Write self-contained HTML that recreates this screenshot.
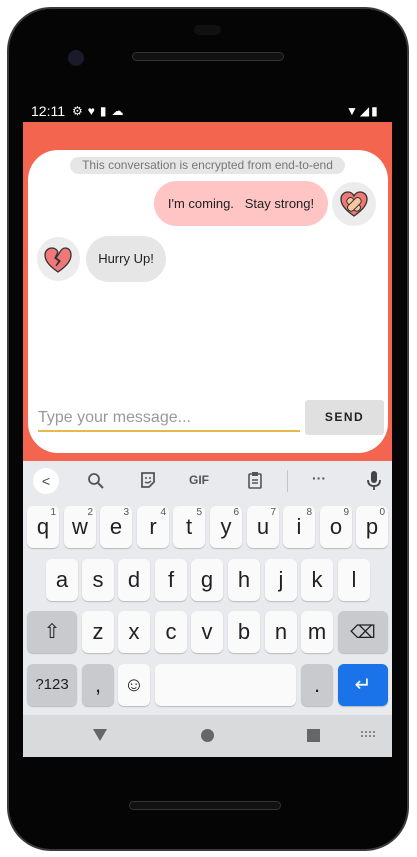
<!DOCTYPE html>
<html><head><style>
*{margin:0;padding:0;box-sizing:border-box}
body{width:417px;height:857px;background:#fff;position:relative;overflow:hidden;font-family:"Liberation Sans",sans-serif}
.a{position:absolute}
.k{position:absolute;background:#fafafa;border-radius:6px;box-shadow:0 1px 1px #b8babd;font-size:22px;color:#202124;text-align:center;line-height:42px;height:42px;width:32px}
.k sup{position:absolute;right:3px;top:-14px;font-size:10px;color:#555}
.d{background:#c8cacd}
</style></head><body>
<div class="a" style="left:7px;top:7px;width:402px;height:844px;border-radius:44px;background:#050505;border:2px solid #3a3a3a"></div>
<div class="a" style="left:68px;top:50px;width:16px;height:16px;border-radius:50%;background:#1a1a2a"></div>
<div class="a" style="left:132px;top:52px;width:152px;height:9px;border-radius:5px;background:#111;border:1px solid #333"></div>
<div class="a" style="left:194px;top:25px;width:27px;height:10px;border-radius:5px;background:#111"></div>
<div class="a" style="left:129px;top:801px;width:152px;height:9px;border-radius:5px;background:#111;border:1px solid #333"></div>
<!-- status -->
<div class="a" style="left:31px;top:103px;color:#fff;font-size:14px">12:11</div>
<div class="a" style="left:72px;top:104px;color:#fff;font-size:12px;letter-spacing:5px">⚙♥▮☁</div>
<div class="a" style="left:346px;top:104px;color:#fff;font-size:12px;letter-spacing:2px">▼◢▮</div>
<!-- screen -->
<div class="a" style="left:23px;top:122px;width:369px;height:339px;background:#f3654f"></div>
<div class="a" style="left:28px;top:150px;width:360px;height:303px;background:#fff;border-radius:30px"></div>
<div class="a" style="left:70px;top:157px;width:275px;height:17px;background:#e6e6e6;border-radius:9px;color:#777;font-size:12px;text-align:center;line-height:17px">This conversation is encrypted from end-to-end</div>
<div class="a" style="left:154px;top:181px;width:174px;height:45px;background:#ffc4c4;border-radius:23px;font-size:13px;line-height:45px;text-align:center;color:#222">I'm coming.&nbsp;&nbsp;&nbsp;Stay strong!</div>
<div class="a" style="left:332px;top:182px;width:44px;height:44px;background:#ececec;border-radius:50%"></div>
<svg class="a" style="left:339px;top:190px" width="30" height="28" viewBox="0 0 30 28"><path d="M15 26 C5 19 2 14 2 9 C2 5 5 2 9 2 C12 2 14 4 15 6 C16 4 18 2 21 2 C25 2 28 5 28 9 C28 14 25 19 15 26Z" fill="#f07878" stroke="#333" stroke-width="1.3"/><rect x="7" y="11" width="16" height="7" rx="3" fill="#f5c8a0" stroke="#333" stroke-width="1" transform="rotate(45 15 14)"/><rect x="7" y="11" width="16" height="7" rx="3" fill="#f5c8a0" stroke="#333" stroke-width="1" transform="rotate(-45 15 14)"/></svg>
<div class="a" style="left:37px;top:237px;width:43px;height:44px;background:#ececec;border-radius:50%"></div>
<svg class="a" style="left:43px;top:246px" width="30" height="28" viewBox="0 0 30 28"><path d="M15 26 C5 19 2 14 2 9 C2 5 5 2 9 2 C12 2 14 4 15 6 L12 12 L16 15 L13 20 L17 15 L13 12 L17 6 C18 4 20 2 22 2 C26 2 28 5 28 9 C28 14 25 19 15 26Z" fill="#f07878" stroke="#333" stroke-width="1.3"/></svg>
<div class="a" style="left:86px;top:236px;width:80px;height:46px;background:#e6e6e6;border-radius:23px;font-size:13px;line-height:46px;text-align:center;color:#222">Hurry Up!</div>
<div class="a" style="left:38px;top:409px;font-size:16px;color:#999">Type your message...</div>
<div class="a" style="left:38px;top:430px;width:262px;height:2px;background:#e8b84a"></div>
<div class="a" style="left:305px;top:400px;width:79px;height:35px;background:#e0e0e0;border-radius:3px;font-size:12px;letter-spacing:1.5px;text-align:center;line-height:35px;font-weight:bold;color:#222">SEND</div>
<!-- keyboard -->
<div class="a" style="left:23px;top:461px;width:369px;height:254px;background:#e8eaed"></div>
<div class="a" style="left:33px;top:468px;width:26px;height:26px;border-radius:50%;background:#fff;text-align:center;line-height:26px;font-size:14px;color:#444">&lt;</div>
<svg class="a" style="left:87px;top:472px" width="18" height="18" viewBox="0 0 18 18"><circle cx="7" cy="7" r="5" fill="none" stroke="#555" stroke-width="1.8"/><path d="M11 11 L16 16" stroke="#555" stroke-width="2"/></svg>
<svg class="a" style="left:139px;top:471px" width="18" height="18" viewBox="0 0 18 18"><path d="M3 2 H15 V11 L10 16 H3 Z" fill="none" stroke="#555" stroke-width="1.8"/><circle cx="7" cy="7" r="1" fill="#555"/><circle cx="11" cy="7" r="1" fill="#555"/><path d="M6 11 Q9 13 12 10" fill="none" stroke="#555" stroke-width="1.4"/></svg>
<div class="a" style="left:189px;top:473px;font-size:12px;font-weight:bold;color:#555">GIF</div>
<svg class="a" style="left:247px;top:471px" width="16" height="18" viewBox="0 0 16 18"><rect x="2" y="3" width="12" height="14" rx="1" fill="none" stroke="#555" stroke-width="1.6"/><rect x="5" y="1" width="6" height="4" fill="#555"/><path d="M5 9H11M5 12H11" stroke="#555" stroke-width="1.4"/></svg>
<div class="a" style="left:287px;top:470px;width:1px;height:22px;background:#c4c4c4"></div>
<div class="a" style="left:312px;top:470px;font-size:14px;color:#555;font-weight:bold">···</div>
<svg class="a" style="left:366px;top:470px" width="16" height="22" viewBox="0 0 16 22"><rect x="5" y="1" width="6" height="12" rx="3" fill="#444"/><path d="M2 10 Q2 16 8 16 Q14 16 14 10" fill="none" stroke="#444" stroke-width="1.8"/><path d="M8 16V20" stroke="#444" stroke-width="1.8"/></svg>
<div class="k" style="left:27px;top:506px">q<sup>1</sup></div>
<div class="k" style="left:64px;top:506px">w<sup>2</sup></div>
<div class="k" style="left:100px;top:506px">e<sup>3</sup></div>
<div class="k" style="left:137px;top:506px">r<sup>4</sup></div>
<div class="k" style="left:173px;top:506px">t<sup>5</sup></div>
<div class="k" style="left:210px;top:506px">y<sup>6</sup></div>
<div class="k" style="left:247px;top:506px">u<sup>7</sup></div>
<div class="k" style="left:283px;top:506px">i<sup>8</sup></div>
<div class="k" style="left:320px;top:506px">o<sup>9</sup></div>
<div class="k" style="left:356px;top:506px">p<sup>0</sup></div>
<div class="k" style="left:46px;top:559px">a</div>
<div class="k" style="left:82px;top:559px">s</div>
<div class="k" style="left:118px;top:559px">d</div>
<div class="k" style="left:155px;top:559px">f</div>
<div class="k" style="left:191px;top:559px">g</div>
<div class="k" style="left:228px;top:559px">h</div>
<div class="k" style="left:265px;top:559px">j</div>
<div class="k" style="left:301px;top:559px">k</div>
<div class="k" style="left:338px;top:559px">l</div>
<div class="k d" style="left:27px;top:611px;width:50px;font-size:20px">⇧</div>
<div class="k" style="left:82px;top:611px">z</div>
<div class="k" style="left:118px;top:611px">x</div>
<div class="k" style="left:155px;top:611px">c</div>
<div class="k" style="left:191px;top:611px">v</div>
<div class="k" style="left:228px;top:611px">b</div>
<div class="k" style="left:265px;top:611px">n</div>
<div class="k" style="left:301px;top:611px">m</div>
<div class="k d" style="left:338px;top:611px;width:50px;font-size:18px">⌫</div>
<div class="k d" style="left:27px;top:664px;width:50px;font-size:15px">?123</div>
<div class="k d" style="left:82px;top:664px">,</div>
<div class="k" style="left:118px;top:664px;font-size:20px">☺</div>
<div class="k" style="left:155px;top:664px;width:141px"></div>
<div class="k d" style="left:301px;top:664px">.</div>
<div class="k" style="left:338px;top:664px;width:50px;background:#1a73e8;color:#fff;font-size:20px">↵</div>
<div class="a" style="left:23px;top:715px;width:369px;height:42px;background:#d9dadc"></div>
<div class="a" style="left:93px;top:729px;width:0;height:0;border-left:7px solid transparent;border-right:7px solid transparent;border-top:12px solid #666"></div>
<div class="a" style="left:201px;top:729px;width:13px;height:13px;border-radius:50%;background:#666"></div>
<div class="a" style="left:307px;top:729px;width:13px;height:13px;background:#666"></div>
<div class="a" style="left:361px;top:731px;width:14px;height:6px;border-top:2px dotted #888;border-bottom:2px dotted #888"></div>
</body></html>
